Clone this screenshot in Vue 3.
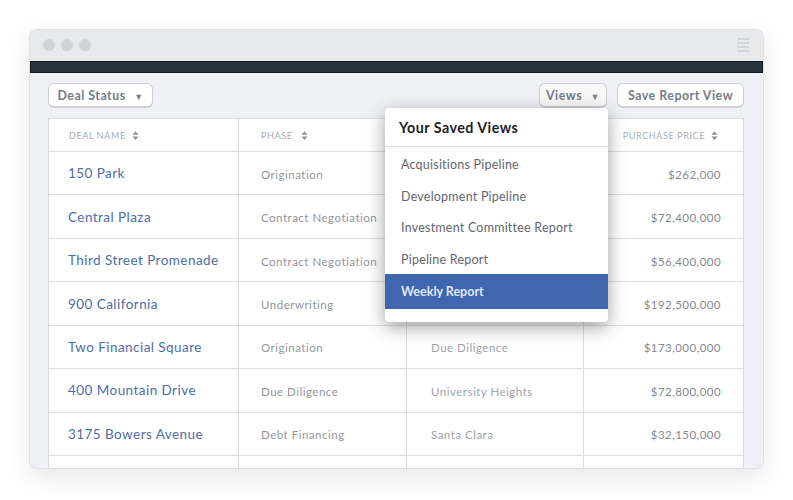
<script setup>
const rows = [
  { name: '150 Park', phase: 'Origination', location: '', price: '$262,000' },
  { name: 'Central Plaza', phase: 'Contract Negotiation', location: '', price: '$72,400,000' },
  { name: 'Third Street Promenade', phase: 'Contract Negotiation', location: '', price: '$56,400,000' },
  { name: '900 California', phase: 'Underwriting', location: '', price: '$192,500,000' },
  { name: 'Two Financial Square', phase: 'Origination', location: 'Due Diligence', price: '$173,000,000' },
  { name: '400 Mountain Drive', phase: 'Due Diligence', location: 'University Heights', price: '$72,800,000' },
  { name: '3175 Bowers Avenue', phase: 'Debt Financing', location: 'Santa Clara', price: '$32,150,000' },
  { name: '', phase: '', location: '', price: '' }
]
const views = ['Acquisitions Pipeline', 'Development Pipeline', 'Investment Committee Report', 'Pipeline Report']
</script>

<template>
  <div class="page">
    <div class="window">
      <div class="titlebar">
        <div class="dots"><span></span><span></span><span></span></div>
        <div class="burger"><span></span><span></span><span></span><span></span></div>
      </div>
      <div class="navbar"></div>
      <div class="content">
        <div class="toolbar">
          <button class="btn btn--status">Deal Status <i class="caret">▼</i></button>
          <div class="toolbar__right">
            <button class="btn btn--views">Views <i class="caret">▼</i></button>
            <button class="btn btn--save">Save Report View</button>
          </div>
        </div>

        <div class="table">
          <div class="row row--head">
            <div class="cell cell--name">
              <span class="label">DEAL NAME</span>
              <svg class="sort" viewBox="0 0 8 10"><path d="M4 0 7.5 4H.5zM4 10 .5 6h7z" /></svg>
            </div>
            <div class="cell cell--phase">
              <span class="label">PHASE</span>
              <svg class="sort" viewBox="0 0 8 10"><path d="M4 0 7.5 4H.5zM4 10 .5 6h7z" /></svg>
            </div>
            <div class="cell cell--place"></div>
            <div class="cell cell--price">
              <span class="label">PURCHASE PRICE</span>
              <svg class="sort" viewBox="0 0 8 10"><path d="M4 0 7.5 4H.5zM4 10 .5 6h7z" /></svg>
            </div>
          </div>
          <div v-for="(row, i) in rows" :key="i" class="row">
            <div class="cell cell--name"><a class="deal">{{ row.name }}</a></div>
            <div class="cell cell--phase">{{ row.phase }}</div>
            <div class="cell cell--place">{{ row.location }}</div>
            <div class="cell cell--price">{{ row.price }}</div>
          </div>
        </div>

        <div class="menu">
          <div class="menu__title">Your Saved Views</div>
          <ul class="menu__list">
            <li v-for="v in views" :key="v" class="menu__item">{{ v }}</li>
            <li class="menu__item menu__item--active">Weekly Report</li>
          </ul>
        </div>
      </div>
    </div>
  </div>
</template>

<style>
html, body { background: #fff; }
</style>

<style scoped>
.page {
  width: 793px;
  height: 500px;
  overflow: hidden;
  padding: 30px 30px 0 30px;
  box-sizing: border-box;
  font-family: Lato, "Open Sans", sans-serif;
}

.window {
  width: 733px;
  height: 438px;
  border-radius: 7px;
  overflow: hidden;
  background: #f0f1f6;
  box-shadow: 0 0 0 1px #dfe0e3, 0 8px 24px rgba(0, 0, 0, 0.1);
  display: flex;
  flex-direction: column;
}

.titlebar {
  height: 31px;
  flex: none;
  background: #e8e9eb;
  display: flex;
  align-items: center;
  justify-content: space-between;
  padding: 0 14px 2px 13px;
  box-sizing: border-box;
}

.dots { display: flex; gap: 6px; }
.dots span {
  width: 12px;
  height: 12px;
  border-radius: 50%;
  background: #d2d3d5;
}

.burger { display: flex; flex-direction: column; gap: 2px; }
.burger span { width: 12px; height: 2px; background: #d3d4d6; }

.navbar {
  height: 12px;
  flex: none;
  background: #293340;
  border: 1px solid #14181f;
  box-sizing: border-box;
}

.content {
  position: relative;
  flex: 1;
  padding: 10px 19px 0 18px;
  min-height: 0;
}

.toolbar {
  display: flex;
  justify-content: space-between;
  height: 25px;
  margin-bottom: 10px;
}
.toolbar__right { display: flex; gap: 10px; }

.btn {
  height: 25px;
  box-sizing: border-box;
  padding: 0;
  background: #fff;
  border: 1px solid #ccced3;
  border-bottom-width: 2px;
  border-radius: 6px;
  font-family: inherit;
  font-size: 12.4px;
  font-weight: 700;
  letter-spacing: 0.5px;
  color: #767c86;
  white-space: nowrap;
}
.btn--status { width: 105px; }
.btn--views { width: 68px; background: #f8f8f9; }
.btn--save { width: 127px; }

.caret {
  font-style: normal;
  font-size: 9px;
  margin-left: 5px;
  color: #7d838c;
}

.table {
  background: #fff;
  border: 1px solid #d9dadf;
  border-bottom: 0;
  width: 696px;
  box-sizing: border-box;
}

.row {
  display: grid;
  grid-template-columns: 189px 168px 177px 1fr;
  height: 43.45px;
  border-bottom: 1px solid #dcdde1;
  box-sizing: border-box;
}
.row--head { height: 33px; }

.cell {
  display: flex;
  align-items: center;
  padding-left: 22px;
  padding-top: 2px;
  border-left: 1px solid #dcdde1;
  box-sizing: border-box;
  font-size: 11.5px;
  letter-spacing: 0.5px;
  color: #93969c;
  white-space: nowrap;
}
.cell--name { border-left: 0; padding-left: 19px; padding-top: 0; }
.cell--place { padding-left: 24px; color: #a0a3a8; }
.cell--price {
  justify-content: flex-end;
  padding-right: 22px;
  padding-left: 0;
  letter-spacing: 0.45px;
  color: #85888e;
}

.row--head .cell--name { padding-left: 20px; padding-top: 1px; }
.row--head .cell--phase { padding-left: 22px; padding-top: 1px; }
.row--head .cell--price { padding-right: 25px; padding-top: 1px; }

.label {
  font-size: 9px;
  letter-spacing: 0.6px;
  color: #a9acb1;
}

.sort {
  width: 7px;
  height: 9px;
  margin-left: 6px;
  fill: #8e9197;
}

.cell--phase .sort { margin-left: 9px; }

.deal {
  font-size: 13.5px;
  letter-spacing: 0.45px;
  color: #4e6ca8;
}

.menu {
  position: absolute;
  left: 355px;
  top: 35px;
  width: 223px;
  height: 214px;
  background: #fff;
  border-radius: 4px;
  box-shadow: 0 5px 18px rgba(0, 0, 0, 0.38);
}

.menu__title {
  height: 39px;
  box-sizing: border-box;
  padding: 0 14px;
  line-height: 39px;
  border-bottom: 1px solid #e2e3e6;
  font-size: 14.3px;
  font-weight: 700;
  letter-spacing: 0.45px;
  color: #1d2026;
}

.menu__list {
  list-style: none;
  margin: 0;
  padding: 1px 0 0;
}

.menu__item {
  height: 31.6px;
  line-height: 34px;
  padding: 0 16px;
  font-size: 12.5px;
  letter-spacing: 0.22px;
  color: #62666d;
  white-space: nowrap;
}

.menu__item--active {
  height: 35px;
  line-height: 35px;
  background: #4066b0;
  color: #dfe8f7;
  font-weight: 700;
  letter-spacing: 0;
}
</style>
